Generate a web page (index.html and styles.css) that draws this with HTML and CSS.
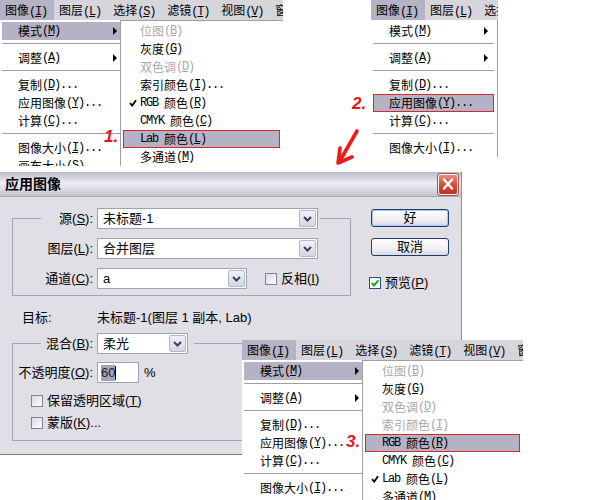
FILE: index.html
```html
<!DOCTYPE html>
<html lang="zh-CN">
<head>
    <meta charset="UTF-8">
    <title>应用图像</title>
    <link rel="stylesheet" href="styles.css">
</head>
<body>
<div class="board">

    <!-- 第一张：图像 > 模式 > Lab 颜色 -->
    <div class="menu shot1">
        <div class="bar">
            <span class="on">图像<i class="k">(<u>I</u>)</i></span><span>图层<i class="k">(<u>L</u>)</i></span><span>选择<i class="k">(<u>S</u>)</i></span><span>滤镜<i class="k">(<u>T</u>)</i></span><span>视图<i class="k">(<u>V</u>)</i></span><span>窗口<i class="k">(<u>W</u>)</i></span>
        </div>
        <div class="drops">
            <ul class="drop">
                <li class="on more">模式<i class="k">(<u>M</u>)</i></li>
                <li class="sep"></li>
                <li class="more">调整<i class="k">(<u>A</u>)</i></li>
                <li class="sep"></li>
                <li>复制<i class="k">(<u>D</u>)...</i></li>
                <li>应用图像<i class="k">(<u>Y</u>)...</i></li>
                <li>计算<i class="k">(<u>C</u>)...</i></li>
                <li class="sep"></li>
                <li>图像大小<i class="k">(<u>I</u>)...</i></li>
                <li>画布大小<i class="k">(<u>S</u>)...</i></li>
            </ul>
            <ul class="sub">
                <li class="off">位图<i class="k">(<u>B</u>)</i></li>
                <li>灰度<i class="k">(<u>G</u>)</i></li>
                <li class="off">双色调<i class="k">(<u>D</u>)</i></li>
                <li>索引颜色<i class="k">(<u>I</u>)...</i></li>
                <li><svg class="tick" viewBox="0 0 8 8"><path d="M1 4.2 L3.2 6.6 L7 1.2"/></svg><i class="k">RGB </i>颜色<i class="k">(<u>R</u>)</i></li>
                <li><i class="k">CMYK </i>颜色<i class="k">(<u>C</u>)</i></li>
                <li class="on pick"><i class="k">Lab </i>颜色<i class="k">(<u>L</u>)</i></li>
                <li>多通道<i class="k">(<u>M</u>)</i></li>
            </ul>
        </div>
    </div>

    <!-- 第二张：图像 > 应用图像 -->
    <div class="menu shot2">
        <div class="bar">
            <span class="on">图像<i class="k">(<u>I</u>)</i></span><span>图层<i class="k">(<u>L</u>)</i></span><span>选择<i class="k">(<u>S</u>)</i></span>
        </div>
        <div class="drops">
            <ul class="drop">
                <li class="more">模式<i class="k">(<u>M</u>)</i></li>
                <li class="sep"></li>
                <li class="more">调整<i class="k">(<u>A</u>)</i></li>
                <li class="sep"></li>
                <li>复制<i class="k">(<u>D</u>)...</i></li>
                <li class="on pick">应用图像<i class="k">(<u>Y</u>)...</i></li>
                <li>计算<i class="k">(<u>C</u>)...</i></li>
                <li class="sep"></li>
                <li>图像大小<i class="k">(<u>I</u>)...</i></li>
            </ul>
        </div>
    </div>

    <!-- 应用图像 对话框 -->
    <div class="dlg">
        <div class="cap">
            <b>应用图像</b>
            <span class="x"><svg viewBox="0 0 18 18" width="18" height="18"><path d="M5 4.5 L13 13.5 M13 4.5 L5 13.5"/></svg></span>
        </div>
        <div class="body">
            <div class="main">
                <fieldset class="grp src">
                    <legend>
                        <span class="lbl">源(<u>S</u>):</span>
                        <span class="sel w1"><span class="val">未标题-1</span><span class="dd"><svg viewBox="0 0 9 6" width="9" height="6"><path d="M1 1 L4.5 4.5 L8 1"/></svg></span></span>
                    </legend>
                    <div class="row">
                        <span class="lbl">图层(<u>L</u>):</span>
                        <span class="sel w1"><span class="val">合并图层</span><span class="dd"><svg viewBox="0 0 9 6" width="9" height="6"><path d="M1 1 L4.5 4.5 L8 1"/></svg></span></span>
                    </div>
                    <div class="row">
                        <span class="lbl">通道(<u>C</u>):</span>
                        <span class="sel w2"><span class="val">a</span><span class="dd"><svg viewBox="0 0 9 6" width="9" height="6"><path d="M1 1 L4.5 4.5 L8 1"/></svg></span></span>
                        <span class="box inv"></span><span>反相(<u>I</u>)</span>
                    </div>
                </fieldset>

                <div class="target">
                    <span class="tlbl">目标:</span>
                    <span>未标题-1(图层 1 副本, Lab)</span>
                </div>

                <fieldset class="grp blend">
                    <legend>
                        <span class="lbl">混合(<u>B</u>):</span>
                        <span class="sel w3"><span class="val">柔光</span><span class="dd"><svg viewBox="0 0 9 6" width="9" height="6"><path d="M1 1 L4.5 4.5 L8 1"/></svg></span></span>
                    </legend>
                    <div class="row">
                        <span class="lbl">不透明度(<u>O</u>):</span>
                        <span class="inp"><span class="hl">60</span><i class="caret"></i></span>
                        <span class="pct">%</span>
                    </div>
                    <div class="cb"><span class="box"></span><span>保留透明区域(<u>T</u>)</span></div>
                    <div class="cb"><span class="box"></span><span>蒙版(<u>K</u>)...</span></div>
                </fieldset>
            </div>

            <div class="side">
                <button class="btn def">好</button>
                <button class="btn">取消</button>
                <div class="prev">
                    <span class="box on"><svg viewBox="0 0 10 10" width="10" height="10"><path d="M1.8 5 L4 7.4 L8.4 2.4"/></svg></span>
                    <span>预览(<u>P</u>)</span>
                </div>
            </div>
        </div>
    </div>

    <!-- 第三张：图像 > 模式 > RGB 颜色 -->
    <div class="menu shot3">
        <div class="bar">
            <span class="on">图像<i class="k">(<u>I</u>)</i></span><span>图层<i class="k">(<u>L</u>)</i></span><span>选择<i class="k">(<u>S</u>)</i></span><span>滤镜<i class="k">(<u>T</u>)</i></span><span>视图<i class="k">(<u>V</u>)</i></span><span>窗口<i class="k">(<u>W</u>)</i></span>
        </div>
        <div class="drops">
            <ul class="drop">
                <li class="on more">模式<i class="k">(<u>M</u>)</i></li>
                <li class="sep"></li>
                <li class="more">调整<i class="k">(<u>A</u>)</i></li>
                <li class="sep"></li>
                <li>复制<i class="k">(<u>D</u>)...</i></li>
                <li>应用图像<i class="k">(<u>Y</u>)...</i></li>
                <li>计算<i class="k">(<u>C</u>)...</i></li>
                <li class="sep"></li>
                <li>图像大小<i class="k">(<u>I</u>)...</i></li>
            </ul>
            <ul class="sub">
                <li class="off">位图<i class="k">(<u>B</u>)</i></li>
                <li>灰度<i class="k">(<u>G</u>)</i></li>
                <li class="off">双色调<i class="k">(<u>D</u>)</i></li>
                <li class="off">索引颜色<i class="k">(<u>I</u>)</i></li>
                <li class="on pick"><i class="k">RGB </i>颜色<i class="k">(<u>R</u>)</i></li>
                <li><i class="k">CMYK </i>颜色<i class="k">(<u>C</u>)</i></li>
                <li><svg class="tick" viewBox="0 0 8 8"><path d="M1 4.2 L3.2 6.6 L7 1.2"/></svg><i class="k">Lab </i>颜色<i class="k">(<u>L</u>)</i></li>
                <li>多通道<i class="k">(<u>M</u>)</i></li>
            </ul>
        </div>
    </div>

    <!-- 步骤标注 -->
    <span class="tag t1">1.</span>
    <span class="tag t2">2.</span>
    <span class="tag t3">3.</span>
    <svg class="arrow" viewBox="0 0 35 45" width="35" height="45">
        <path d="M27 6 L9.5 36.5 M10 23 L8 38 L22 32"/>
    </svg>
</div>
</body>
</html>
```

FILE: styles.css
```css
* {
    box-sizing: border-box;
}
body {
    margin: 0;
    background: #fff;
}
.board {
    position: relative;
    width: 600px;
    height: 500px;
    overflow: hidden;
}

/* 菜单截图 */
.menu {
    position: absolute;
    display: flex;
    flex-direction: column;
    overflow: hidden;
    font: 12px/18px "Noto Sans CJK SC", sans-serif;
    color: #000;
}
.menu .k {
    font: 12px "Liberation Mono", monospace;
    letter-spacing: -1.2px;
    white-space: pre;
}
.shot1 {
    left: 0;
    top: 0;
    width: 283px;
    height: 166px;
}
.shot2 {
    left: 371px;
    top: 0;
    width: 127px;
    height: 157px;
}
.shot3 {
    left: 240px;
    top: 340px;
    width: 283px;
    height: 160px;
    padding-left: 2px;
    z-index: 2;
}
.bar {
    display: flex;
    flex: none;
    height: 20px;
    background: #d7d5dc;
    white-space: nowrap;
}
.bar span {
    flex: none;
    padding: 0 7px 0 5px;
    line-height: 20px;
}
.bar .on {
    background: #b4b2c4;
}
.drops {
    display: flex;
    flex: 1;
}
.drop,
.sub {
    list-style: none;
    margin: 0;
    background: #fff;
}
.drop {
    flex: none;
    width: 127px;
    padding: 2px 0 0;
    border-right: 1px solid #a0a0a0;
}
.sub {
    position: relative;
    flex: 1;
    margin-left: -7px;
    padding: 1px 0 0;
    border-top: 1px solid #a0a0a0;
    border-left: 1px solid #a0a0a0;
}
.drop li,
.sub li {
    display: flex;
    align-items: center;
    height: 18px;
    margin: 0 2px;
    padding: 0 7px 0 16px;
    white-space: nowrap;
}
.sub li {
    padding-left: 17px;
}
.drop .sep {
    height: 1px;
    margin: 3px 3px 5px 2px;
    padding: 0;
    background: #a0a0a0;
}
.menu li.on {
    background: #b4b2c4;
}
.menu li.pick {
    margin-right: 3px;
    box-shadow: inset 0 0 0 1px #d8262c;
}
.menu li.off {
    color: #a8a8a8;
}
.more::after {
    content: "";
    margin-left: auto;
    border-left: 4px solid #000;
    border-top: 4px solid transparent;
    border-bottom: 4px solid transparent;
}
.tick {
    width: 8px;
    height: 8px;
    margin: 0 3px 0 -11px;
    fill: none;
    stroke: #000;
    stroke-width: 1.8;
}

/* 对话框 */
.dlg {
    position: absolute;
    left: 0;
    top: 172px;
    width: 462px;
    height: 283px;
    background: #e0dfe5;
    border-right: 1px solid #8c8c98;
    border-bottom: 1px solid #7c7c88;
    font: 13px/16px "Liberation Sans", "Noto Sans CJK SC", sans-serif;
    color: #000;
}
.cap {
    display: flex;
    align-items: center;
    justify-content: space-between;
    height: 25px;
    padding: 0 3px 0 5px;
    background: linear-gradient(#b9b9c7, #ececf1 45%, #dcdce3 70%, #c3c3cf);
    border-bottom: 1px solid #a9a9b6;
}
.cap b {
    font-size: 14px;
}
.x {
    display: grid;
    place-items: center;
    width: 20px;
    height: 21px;
    border: 1px solid #fbeeee;
    border-radius: 3px;
    background: linear-gradient(#eb8d7f, #d24e3c 50%, #b93423);
    box-shadow: 0 0 0 1px #a45850;
}
.x path {
    fill: none;
    stroke: #fff;
    stroke-width: 2.4;
    stroke-linecap: round;
}
.body {
    display: flex;
    padding: 11px 0 0 12px;
}
.main {
    width: 339px;
}
.grp {
    min-width: 0;
    margin: 0;
    border: 1px solid #a5a4ad;
}
.src {
    padding: 9px 0 6px;
}
.blend {
    margin-top: 7px;
    padding: 8px 0 9px;
}
.grp legend {
    display: flex;
    align-items: center;
    margin-left: 28px;
    padding: 0 2px 0 0;
}
.blend legend {
    padding-right: 6px;
}
.lbl {
    flex: none;
    width: 80px;
    margin-right: 4px;
    text-align: right;
    white-space: nowrap;
}
legend .lbl {
    width: 52px;
}
.row {
    display: flex;
    align-items: center;
    height: 21px;
}
.row + .row {
    margin-top: 9px;
}
.sel {
    display: flex;
    align-items: center;
    height: 21px;
    padding: 1px;
    background: #fff;
    border: 1px solid #9ca4b8;
}
.w1 {
    width: 221px;
}
.w2 {
    width: 150px;
}
.w3 {
    width: 91px;
}
.val {
    flex: 1;
    padding-left: 4px;
}
.dd {
    display: grid;
    place-items: center;
    width: 17px;
    height: 17px;
    border: 1px solid #b3b7c8;
    border-radius: 2px;
    background: linear-gradient(#f2f2f7, #d3d5e1);
}
.dd path {
    fill: none;
    stroke: #3a4256;
    stroke-width: 2;
}
.box {
    display: grid;
    place-items: center;
    flex: none;
    width: 12px;
    height: 12px;
    margin-right: 4px;
    border: 1px solid #7b8496;
    background: linear-gradient(135deg, #d8d8e0, #fff);
}
.box.inv {
    margin-left: 18px;
}
.box.on {
    background: #fff;
    border-color: #2b5078;
}
.box path {
    fill: none;
    stroke: #21a322;
    stroke-width: 2;
}
.target {
    display: flex;
    height: 16px;
    margin: 14px 0 0 10px;
}
.tlbl {
    width: 75px;
}
.inp {
    display: flex;
    align-items: center;
    width: 42px;
    height: 21px;
    padding: 0 3px;
    background: #fff;
    border: 1px solid #9ca4b8;
}
.hl {
    background: #a3a5b6;
    color: #1b1b30;
}
.caret {
    width: 1px;
    height: 14px;
    background: #000;
}
.pct {
    margin-left: 5px;
}
.cb {
    display: flex;
    align-items: center;
    height: 16px;
    margin-top: 6px;
    padding-left: 18px;
}
.row + .cb {
    margin-top: 10px;
}
.side {
    display: flex;
    flex-direction: column;
    align-items: flex-start;
    margin-left: 20px;
    padding-top: 1px;
}
.btn {
    width: 78px;
    height: 18px;
    padding: 0;
    font: inherit;
    line-height: 16px;
    color: #000;
    border: 1px solid #1f3b73;
    border-radius: 3px;
    background: linear-gradient(#fefefe, #f0f0f4 60%, #d8d8e2);
}
.btn + .btn {
    margin-top: 11px;
}
.btn.def {
    box-shadow: inset 0 0 0 1px #a8c4f0;
}
.prev {
    display: flex;
    align-items: center;
    margin-top: 19px;
    margin-left: -2px;
}

/* 标注 */
.tag {
    position: absolute;
    z-index: 3;
    font: italic bold 17px/17px "Liberation Sans", sans-serif;
    color: #e8141c;
}
.t1 {
    left: 104px;
    top: 128px;
}
.t2 {
    left: 352px;
    top: 95px;
}
.t3 {
    left: 346px;
    top: 433px;
}
.arrow {
    position: absolute;
    left: 330px;
    top: 125px;
}
.arrow path {
    fill: none;
    stroke: #f01a1a;
    stroke-width: 3.6;
    stroke-linecap: round;
    stroke-linejoin: round;
}
```
